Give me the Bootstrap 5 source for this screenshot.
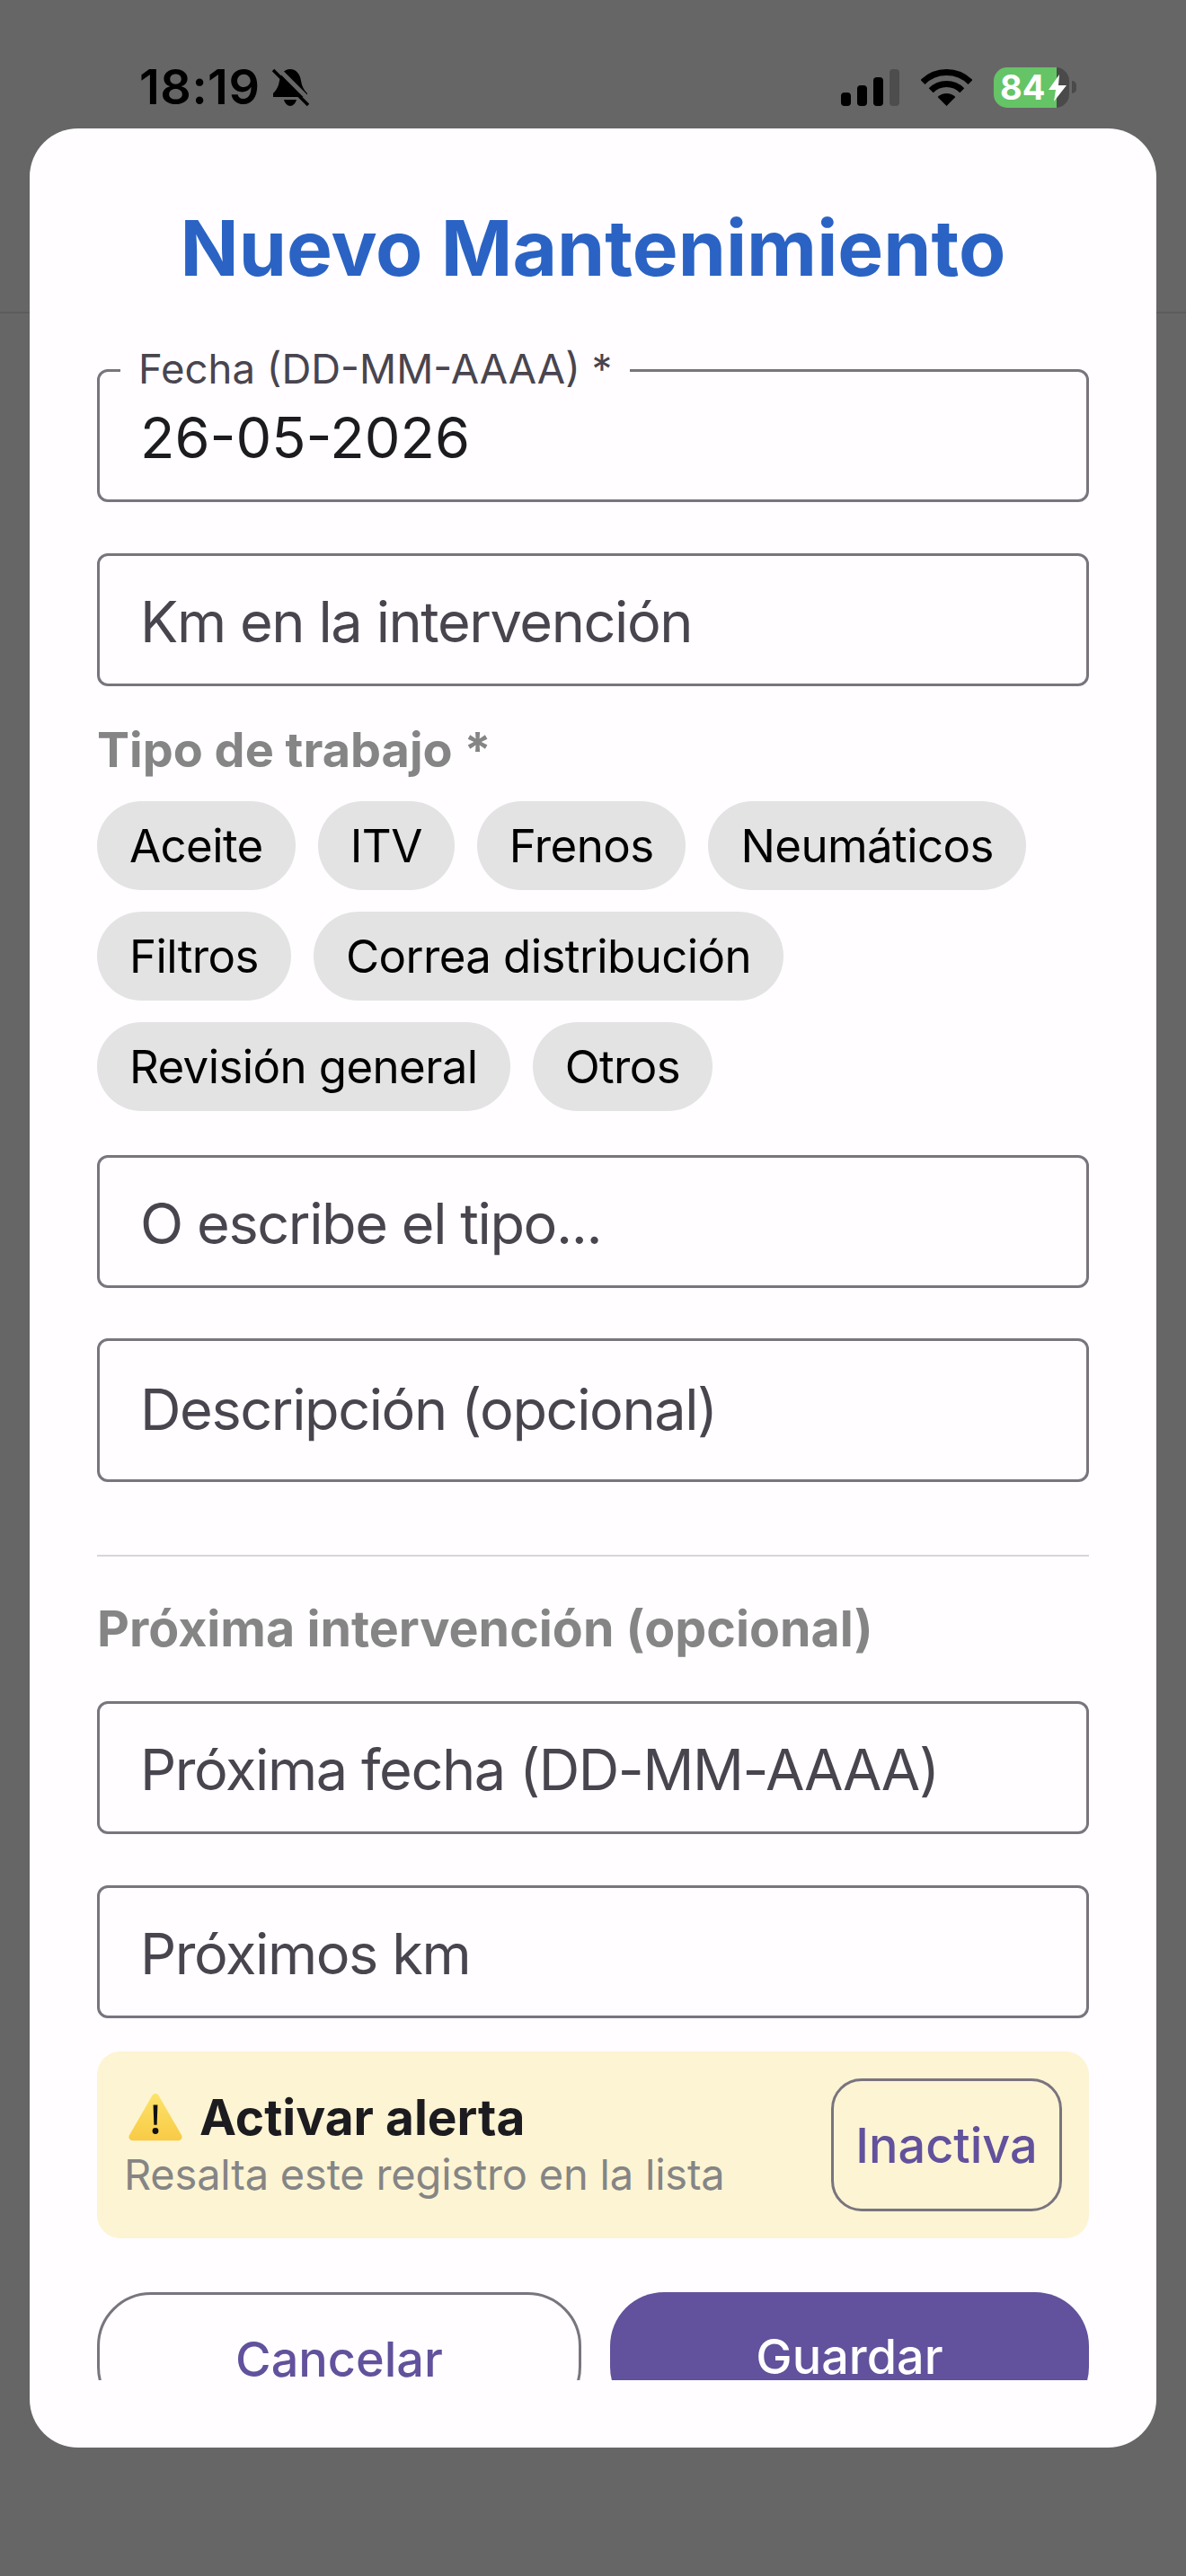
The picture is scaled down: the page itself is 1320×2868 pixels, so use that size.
<!DOCTYPE html>
<html lang="es">
<head>
    <meta charset="UTF-8">
    <meta name="viewport" content="width=device-width, initial-scale=1.0">
    <title>Nuevo Mantenimiento</title>
    <link href="https://cdn.jsdelivr.net/npm/bootstrap@5.3.2/dist/css/bootstrap.min.css" rel="stylesheet">
    <style>
        html, body { height: 100%; }
        body {
            background-color: #676667;
            font-family: Inter, "Liberation Sans", sans-serif;
            overflow: hidden;
        }
        .fondo {
            height: 349px;
            border-bottom: 2px solid #5d5c5d;
        }
        .barra-estado {
            height: 143px;
            padding: 51px 122px 0 155px;
        }
        .hora {
            font-size: 54px;
            line-height: 46px;
            font-weight: 600;
            letter-spacing: 0.5px;
            color: #000;
        }
        .icono-campana { margin-left: 12px; }
        .bateria {
            width: 84px;
            height: 45px;
            border-radius: 15px;
            background: linear-gradient(to right, #65c466 83%, #4a4a4a 83%);
            color: #fff;
            font-size: 38px;
            line-height: 45px;
            font-weight: 700;
            padding-left: 7px;
        }
        .bateria svg { position: absolute; left: 60px; top: 8px; }
        .bateria-punta {
            width: 5px;
            height: 14px;
            margin-left: 3px;
            border-radius: 0 6px 6px 0;
            background: #4a4a4a;
        }
        .capa-modal {
            position: absolute;
            top: 143px;
            left: 33px;
            right: 33px;
            height: 2582px;
        }
        .hoja {
            height: 100%;
            background: #fffdff;
            border-radius: 54px;
            padding: 0 75px 75px;
        }
        .zona-scroll { overflow: hidden; }
        .titulo {
            margin: 82px 0 84px;
            font-size: 85.500px;
            line-height: 102px;
            font-weight: 700;
            color: #2a63c4;
            text-align: center;
        }
        .campo {
            height: 148px;
            margin-bottom: 57px;
            padding: 3px 45px 0;
            border: 3px solid #79747e;
            border-radius: 12px;
            background: transparent;
            color: #1c1b1f;
            font-size: 63px;
        }
        .campo::placeholder { color: #49454f; opacity: 1; letter-spacing: -1.4px; }
        .campo.alto { height: 160px; margin: -1px 0 0; padding: 0 45px 3px; }
        .campo-etiqueta {
            position: absolute;
            left: 26px;
            top: -23px;
            padding: 0 20px;
            background: #fffdff;
            color: #49454f;
            font-size: 45.500px;
            line-height: 46px;
        }
        .seccion {
            font-size: 54px;
            line-height: 66px;
            font-weight: 700;
            color: #858585;
        }
        .seccion-tipo { margin-top: -19px; }
        .seccion-proxima { margin: 47px 0 48px; font-size: 55.500px; }
        .chips { gap: 24px 25px; margin: 24px 0 49px; }
        .chip-tipo {
            height: 99px;
            padding: 0 36px;
            border: 0;
            border-radius: 50px;
            background: #e3e3e3;
            color: #000;
            font-size: 51px;
            line-height: 99px;
            letter-spacing: -0.6px;
        }
        .separador {
            margin: 81px 0 0;
            border: 0;
            border-top: 2px solid #d6d5da;
            opacity: 1;
        }
        .aviso {
            height: 208px;
            padding: 0 30px 0 30px;
            margin-top: -20px;
            border-radius: 26px;
            background: #fdf4d3;
        }
        .aviso-titulo {
            font-size: 55px;
            line-height: 62px;
            font-weight: 700;
            color: #1c1b1f;
        }
        .aviso-icono { margin: 0 18px 0 4px; }
        .aviso-texto {
            margin-top: 3px;
            font-size: 47px;
            line-height: 60px;
            letter-spacing: -0.2px;
            color: #858585;
        }
        .btn-inactiva {
            width: 257px;
            height: 148px;
            padding: 0;
            border: 3px solid #79747e;
            border-radius: 34px;
            background: transparent;
            color: #62519c;
            font-size: 54px;
            font-weight: 500;
        }
        .acciones { gap: 32px; margin-top: 60px; }
        .btn-accion {
            flex: 1 1 0;
            height: 143px;
            padding: 0;
            border-radius: 60px;
            font-size: 54px;
            font-weight: 500;
        }
        .btn-cancelar { border: 3px solid #79747e; padding-top: 5px; background: transparent; color: #62519c; }
        .btn-guardar { border: 0; background: #62519c; color: #fff; }
    </style>
</head>
<body>
<div class="fondo">
    <!-- Barra de estado -->
    <div class="barra-estado d-flex align-items-center justify-content-between">
        <div class="d-flex align-items-center">
            <span class="hora">18:19</span>
            <svg class="icono-campana" width="42" height="43" viewBox="0 0 42 43">
                <path fill="#000" d="M21 1c-7 0-11 6-12 13-1 6-3 10-7 14v4h38v-4c-4-4-6-8-7-14-1-7-5-13-12-13z"/>
                <path fill="#000" d="M14 35h14c-1 4-4 7-7 7s-6-3-7-7z"/>
                <path stroke="#676667" stroke-width="5" d="M6 -1 L45 38"/>
                <path stroke="#000" stroke-width="3.5" d="M2 2 L41 41"/>
            </svg>
        </div>
        <div class="d-flex align-items-center">
            <svg width="65" height="41" viewBox="0 0 65 41">
                <rect x="0" y="26" width="11" height="15" rx="4" fill="#000"/>
                <rect x="18" y="18" width="11" height="23" rx="4" fill="#000"/>
                <rect x="36" y="9" width="11" height="32" rx="4" fill="#000"/>
                <rect x="54" y="0" width="11" height="41" rx="4" fill="#4d4d4d"/>
            </svg>
            <svg class="ms-4" width="57" height="41" viewBox="0 0 57 41" fill="none" stroke="#000" stroke-width="7">
                <path d="M2 14.5A37.5 37.5 0 0 1 55 14.5"/>
                <path d="M11.2 23.7A24.5 24.5 0 0 1 45.8 23.7"/>
                <path fill="#000" stroke="none" d="M28.5 41L18.6 31.1A14 14 0 0 1 38.4 31.1Z"/>
            </svg>
            <div class="bateria position-relative ms-4">84
                <svg width="22" height="30" viewBox="0 0 22 30"><path fill="#fff" d="M13 0L1 17h8L7 30 21 12h-9z"/></svg>
            </div>
            <div class="bateria-punta"></div>
        </div>
    </div>
</div>

<!-- Modal -->
<div class="capa-modal">
    <div class="hoja d-flex flex-column">
        <div class="zona-scroll flex-grow-1">
            <h1 class="titulo">Nuevo Mantenimiento</h1>

            <div class="position-relative">
                <label class="campo-etiqueta">Fecha (DD-MM-AAAA) *</label>
                <input type="text" class="form-control campo" value="26-05-2026">
            </div>
            <input type="text" class="form-control campo" placeholder="Km en la intervención">

            <div class="seccion seccion-tipo">Tipo de trabajo *</div>
            <div class="chips d-flex flex-wrap">
                <button type="button" class="btn chip-tipo">Aceite</button>
                <button type="button" class="btn chip-tipo">ITV</button>
                <button type="button" class="btn chip-tipo">Frenos</button>
                <button type="button" class="btn chip-tipo">Neumáticos</button>
                <button type="button" class="btn chip-tipo">Filtros</button>
                <button type="button" class="btn chip-tipo">Correa distribución</button>
                <button type="button" class="btn chip-tipo">Revisión general</button>
                <button type="button" class="btn chip-tipo">Otros</button>
            </div>

            <input type="text" class="form-control campo" placeholder="O escribe el tipo...">
            <input type="text" class="form-control campo alto" placeholder="Descripción (opcional)">

            <hr class="separador">
            <div class="seccion seccion-proxima">Próxima intervención (opcional)</div>

            <input type="text" class="form-control campo" placeholder="Próxima fecha (DD-MM-AAAA)">
            <input type="text" class="form-control campo" placeholder="Próximos km">

            <div class="aviso d-flex align-items-center justify-content-between">
                <div>
                    <div class="aviso-titulo d-flex align-items-center">
                        <svg class="aviso-icono" width="62" height="56" viewBox="0 0 64 56">
                            <defs>
                                <linearGradient id="triangulo" x1="0" y1="0" x2="0" y2="1">
                                    <stop offset="0" stop-color="#fde36b"/>
                                    <stop offset="1" stop-color="#f8ca45"/>
                                </linearGradient>
                            </defs>
                            <path fill="url(#triangulo)" d="M28.5 3c1.6-2.6 5.4-2.6 7 0L62 49c1.5 3-.5 6-3.5 6h-53C2.500 55 .5 52 2 49z"/>
                            <path fill="#111" d="M29.500 14h5l-.8 23h-3.400z"/>
                            <circle cx="32" cy="44" r="3.500" fill="#111"/>
                        </svg>
                        <span>Activar alerta</span>
                    </div>
                    <div class="aviso-texto">Resalta este registro en la lista</div>
                </div>
                <button type="button" class="btn btn-inactiva">Inactiva</button>
            </div>

            <div class="acciones d-flex">
                <button type="button" class="btn btn-accion btn-cancelar">Cancelar</button>
                <button type="button" class="btn btn-accion btn-guardar">Guardar</button>
            </div>
        </div>
    </div>
</div>
</body>
</html>
